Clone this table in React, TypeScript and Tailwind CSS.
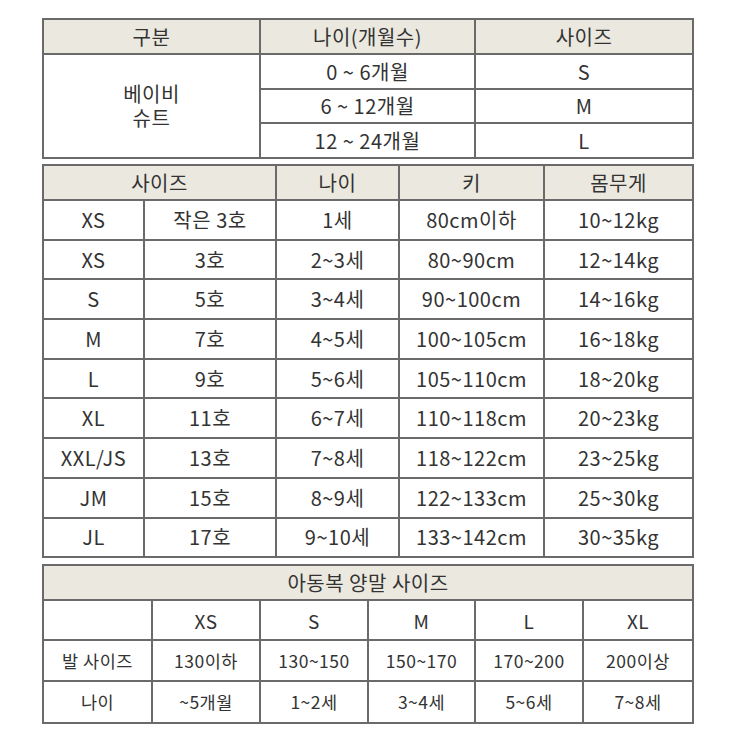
import React from "react";

const font = { fontFamily: '"Noto Sans CJK KR", "Noto Sans", sans-serif' };

const td = "border-2 border-[#6a6a6a] text-center align-middle p-0";
const th = "border-2 border-[#6a6a6a] text-center align-middle p-0 bg-[#ebe8df] font-normal";

const t2rows = [
  ["XS", "작은 3호", "1세", "80cm이하", "10~12kg"],
  ["XS", "3호", "2~3세", "80~90cm", "12~14kg"],
  ["S", "5호", "3~4세", "90~100cm", "14~16kg"],
  ["M", "7호", "4~5세", "100~105cm", "16~18kg"],
  ["L", "9호", "5~6세", "105~110cm", "18~20kg"],
  ["XL", "11호", "6~7세", "110~118cm", "20~23kg"],
  ["XXL/JS", "13호", "7~8세", "118~122cm", "23~25kg"],
  ["JM", "15호", "8~9세", "122~133cm", "25~30kg"],
  ["JL", "17호", "9~10세", "133~142cm", "30~35kg"],
];

export default function App() {
  return (
    <div className="w-[740px] h-[740px] bg-white text-[#333] pl-[42px] pt-[18px]" style={font}>
      <div className="w-[650px] flex flex-col">
        <table className="table-fixed border-collapse w-[650px] text-[20px] tracking-[0.5px] leading-none">
          <colgroup>
            <col className="w-[217px]" />
            <col className="w-[215px]" />
            <col className="w-[218px]" />
          </colgroup>
          <tbody>
            <tr className="h-[35px]">
              <th className={th}>구분</th>
              <th className={th}>나이(개월수)</th>
              <th className={th}>사이즈</th>
            </tr>
            <tr className="h-[35px]">
              <td className={td} rowSpan={3}>
                <div className="flex flex-col items-center gap-[4px]">
                  <span className="leading-[20px]">베이비</span>
                  <span className="leading-[20px]">슈트</span>
                </div>
              </td>
              <td className={td}>0 ~ 6개월</td>
              <td className={td}>S</td>
            </tr>
            <tr className="h-[34px]">
              <td className={td}>6 ~ 12개월</td>
              <td className={td}>M</td>
            </tr>
            <tr className="h-[35px]">
              <td className={td}>12 ~ 24개월</td>
              <td className={td}>L</td>
            </tr>
          </tbody>
        </table>

        <table className="table-fixed border-collapse w-[650px] text-[20px] tracking-[0.5px] leading-none mt-[5px]">
          <colgroup>
            <col className="w-[101px]" />
            <col className="w-[132px]" />
            <col className="w-[123px]" />
            <col className="w-[145px]" />
            <col className="w-[149px]" />
          </colgroup>
          <tbody>
            <tr className="h-[35px]">
              <th className={th} colSpan={2}>사이즈</th>
              <th className={th}>나이</th>
              <th className={th}>키</th>
              <th className={th}>몸무게</th>
            </tr>
            {t2rows.map((r, i) => (
              <tr key={i} className="h-[39.7px]">
                {r.map((c, j) => (
                  <td key={j} className={td}>
                    {c}
                  </td>
                ))}
              </tr>
            ))}
          </tbody>
        </table>

        <table className="table-fixed border-collapse w-[650px] text-[17.5px] tracking-[0.5px] leading-none mt-[6px]">
          <colgroup>
            <col className="w-[109px]" />
            <col className="w-[108px]" />
            <col className="w-[108px]" />
            <col className="w-[107px]" />
            <col className="w-[108px]" />
            <col className="w-[110px]" />
          </colgroup>
          <tbody>
            <tr className="h-[35px]">
              <th className={th + " text-[20px]"} colSpan={6}>
                아동복 양말 사이즈
              </th>
            </tr>
            <tr className="h-[40px]">
              <td className={td}></td>
              <td className={td + " text-[19px]"}>XS</td>
              <td className={td + " text-[19px]"}>S</td>
              <td className={td + " text-[19px]"}>M</td>
              <td className={td + " text-[19px]"}>L</td>
              <td className={td + " text-[19px]"}>XL</td>
            </tr>
            <tr className="h-[41px]">
              <td className={td}>발 사이즈</td>
              <td className={td}>130이하</td>
              <td className={td}>130~150</td>
              <td className={td}>150~170</td>
              <td className={td}>170~200</td>
              <td className={td}>200이상</td>
            </tr>
            <tr className="h-[42px]">
              <td className={td}>나이</td>
              <td className={td}>~5개월</td>
              <td className={td}>1~2세</td>
              <td className={td}>3~4세</td>
              <td className={td}>5~6세</td>
              <td className={td}>7~8세</td>
            </tr>
          </tbody>
        </table>
      </div>
    </div>
  );
}
